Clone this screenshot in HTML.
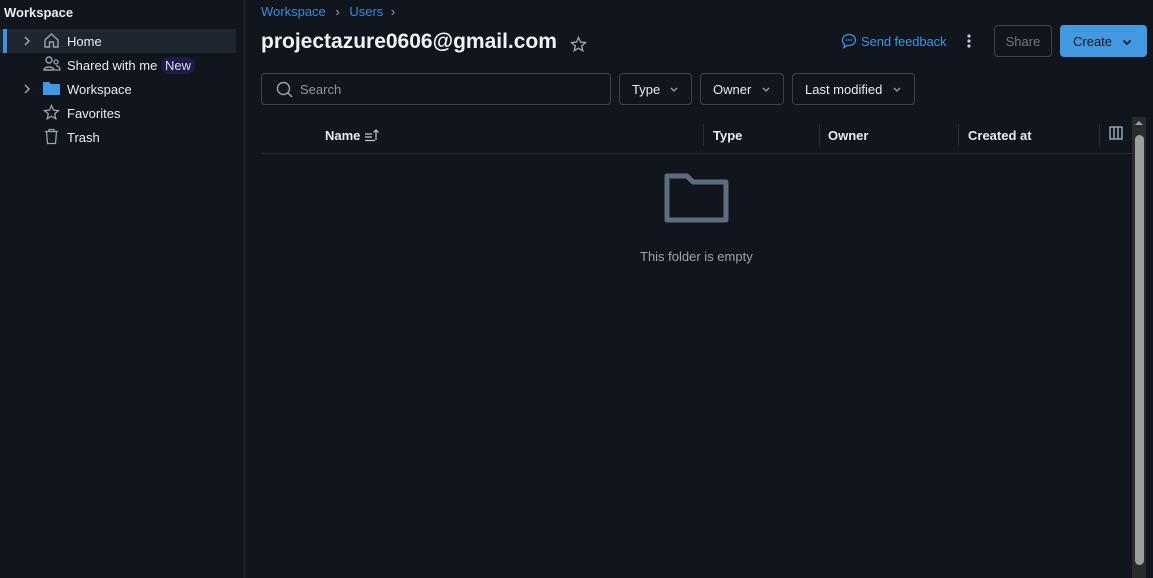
<!DOCTYPE html>
<html><head><style>
*{margin:0;padding:0;box-sizing:border-box}
body{width:1153px;height:578px;background:#11161e;font-family:"Liberation Sans",sans-serif;color:#e8ecf0;font-size:13px;position:relative;overflow:hidden}
.a{position:absolute}
.side{left:0;top:0;width:245px;height:578px;border-right:1px solid #252b33}
.item{left:0;height:24px;width:236px;display:flex;align-items:center}
.item span.t{position:absolute;left:67px;top:5px;color:#e8ecf0}
.chev{position:absolute;left:22px;top:6px;color:#9aa4ae;font-size:12px}
.btn{border:1px solid #3a424c;border-radius:4px;height:32px;top:73px;display:flex;align-items:center;padding-left:12px;color:#e8ecf0}
.dd{position:absolute;right:12px;top:12px}
.th{top:128px;font-weight:bold;color:#e8ecf0}
.sep{top:124px;width:1px;height:22px;background:#2a3039}
</style></head><body>
<div class="a side">
 <div class="a" style="left:4px;top:5px;font-weight:bold;font-size:13px">Workspace</div>
 <div class="a item" style="top:29px;background:#1e2630"><div class="a" style="left:3px;top:0;width:4px;height:24px;background:#3f94e0"></div>
  <svg class="a chev" width="10" height="12" viewBox="0 0 10 12"><path d="M3 2l4 4-4 4" fill="none" stroke="#9aa4ae" stroke-width="1.5"/></svg>
  <svg class="a" style="left:43px;top:3px" width="17" height="17" viewBox="0 0 17 17"><path d="M2 8L8.5 2 15 8v7h-4.5v-5h-4v5H2z" fill="none" stroke="#9aa4ae" stroke-width="1.4"/></svg>
  <span class="t">Home</span></div>
 <div class="a item" style="top:53px">
  <svg class="a" style="left:43px;top:3px" width="18" height="16" viewBox="0 0 18 16"><circle cx="6" cy="4" r="3" fill="none" stroke="#9aa4ae" stroke-width="1.4"/><path d="M1 14c0-4 10-4 10 0z" fill="none" stroke="#9aa4ae" stroke-width="1.4"/><circle cx="13" cy="6" r="2" fill="none" stroke="#9aa4ae" stroke-width="1.3"/><path d="M12 14h5c0-3-2-4-4-4" fill="none" stroke="#9aa4ae" stroke-width="1.3"/></svg>
  <span class="t">Shared with me</span><span class="a" style="left:161px;top:4px;background:#1e1b44;color:#d8dcff;border-radius:8px;padding:1px 4px">New</span></div>
 <div class="a item" style="top:77px">
  <svg class="a chev" width="10" height="12" viewBox="0 0 10 12"><path d="M3 2l4 4-4 4" fill="none" stroke="#9aa4ae" stroke-width="1.5"/></svg>
  <svg class="a" style="left:43px;top:4px" width="17" height="14" viewBox="0 0 17 14"><path d="M0 1h6l2 2h9v11H0z" fill="#4297e4"/></svg>
  <span class="t">Workspace</span></div>
 <div class="a item" style="top:101px">
  <svg class="a" style="left:43px;top:3px" width="17" height="17" viewBox="0 0 17 17"><path d="M8.5 1.5l2 4.6 5 .5-3.8 3.3 1.1 4.9-4.3-2.6-4.3 2.6 1.1-4.9L1.5 6.6l5-.5z" fill="none" stroke="#9aa4ae" stroke-width="1.3"/></svg>
  <span class="t">Favorites</span></div>
 <div class="a item" style="top:125px">
  <svg class="a" style="left:43px;top:3px" width="17" height="17" viewBox="0 0 17 17"><path d="M2 3.5h13M6 3.5V1.5h5v2M3.5 3.5l1 12h8l1-12" fill="none" stroke="#9aa4ae" stroke-width="1.3"/></svg>
  <span class="t">Trash</span></div>
</div>

<div class="a" style="left:261px;top:4px;color:#3c8ad6">Workspace <span style="color:#9aa4ae;margin:0 6px">›</span> Users <span style="color:#9aa4ae;margin-left:4px">›</span></div>
<div class="a" style="left:261px;top:30px;font-size:21px;font-weight:bold;color:#f0f3f6">projectazure0606@gmail.com</div>
<svg class="a" style="left:570px;top:36px" width="17" height="17" viewBox="0 0 17 17"><path d="M8.5 1.5l2 4.6 5 .5-3.8 3.3 1.1 4.9-4.3-2.6-4.3 2.6 1.1-4.9L1.5 6.6l5-.5z" fill="none" stroke="#9aa4ae" stroke-width="1.4"/></svg>

<svg class="a" style="left:841px;top:33px" width="16" height="16" viewBox="0 0 16 16"><path d="M8 1.5c3.6 0 6.5 2.4 6.5 5.5S11.6 12.5 8 12.5c-.6 0-1.2 0-1.7-.2L3 14.5l.6-3C2.3 10.5 1.5 9 1.5 7 1.5 3.9 4.4 1.5 8 1.5z" fill="none" stroke="#3f94e0" stroke-width="1.3"/><circle cx="5.5" cy="7" r=".9" fill="#3f94e0"/><circle cx="8" cy="7" r=".9" fill="#3f94e0"/><circle cx="10.5" cy="7" r=".9" fill="#3f94e0"/></svg>
<div class="a" style="left:861px;top:34px;color:#3f94e0;letter-spacing:-0.1px">Send feedback</div>
<svg class="a" style="left:966px;top:33px" width="6" height="16"><circle cx="3" cy="3" r="1.6" fill="#c0c8d0"/><circle cx="3" cy="8" r="1.6" fill="#c0c8d0"/><circle cx="3" cy="13" r="1.6" fill="#c0c8d0"/></svg>
<div class="a" style="left:994px;top:25px;width:58px;height:32px;border:1px solid #3a424c;border-radius:4px;color:#6e7780;text-align:center;line-height:32px">Share</div>
<div class="a" style="left:1060px;top:25px;width:87px;height:32px;background:#4299e1;border-radius:4px;color:#10161e;line-height:33px;padding-left:13px">Create<svg class="a" style="left:62px;top:14px" width="10" height="7"><path d="M1.5 1.5l3.5 3.5 3.5-3.5" fill="none" stroke="#10161e" stroke-width="1.6"/></svg></div>

<div class="a btn" style="left:261px;width:350px;color:#8d96a0"><svg style="margin:0 7px 0 2px" width="17" height="17" viewBox="0 0 17 17"><circle cx="7.5" cy="7.5" r="6" fill="none" stroke="#9aa4ae" stroke-width="1.4"/><path d="M12 12l4 4" stroke="#9aa4ae" stroke-width="1.4"/></svg>Search</div>
<div class="a btn" style="left:619px;width:73px">Type<svg class="dd" width="10" height="7"><path d="M2 2l3 3 3-3" fill="none" stroke="#9aa4ae" stroke-width="1.3"/></svg></div>
<div class="a btn" style="left:700px;width:84px">Owner<svg class="dd" width="10" height="7"><path d="M2 2l3 3 3-3" fill="none" stroke="#9aa4ae" stroke-width="1.3"/></svg></div>
<div class="a btn" style="left:792px;width:123px">Last modified<svg class="dd" width="10" height="7"><path d="M2 2l3 3 3-3" fill="none" stroke="#9aa4ae" stroke-width="1.3"/></svg></div>

<div class="a th" style="left:325px">Name</div>
<svg class="a" style="left:364px;top:128px" width="16" height="14" viewBox="0 0 16 14"><path d="M1 6h7M1 9h7M1 12.5h10M12 12V2M9.5 4.5L12 2l2.5 2.5" fill="none" stroke="#c0c8d0" stroke-width="1.2"/></svg>
<div class="a sep" style="left:703px"></div><div class="a th" style="left:713px">Type</div>
<div class="a sep" style="left:819px"></div><div class="a th" style="left:828px">Owner</div>
<div class="a sep" style="left:958px"></div><div class="a th" style="left:968px">Created at</div>
<div class="a sep" style="left:1099px"></div>
<svg class="a" style="left:1109px;top:126px" width="14" height="14" viewBox="0 0 14 14"><path d="M1 1h12v12H1zM5 1v12M9 1v12" fill="none" stroke="#a8b8c8" stroke-width="1.3"/></svg>
<div class="a" style="left:261px;top:153px;width:871px;height:1px;background:#252b33"></div>

<svg class="a" style="left:664px;top:173px" width="65" height="50" viewBox="0 0 65 50"><path d="M3 3h20l6 6h33v38H3z" fill="none" stroke="#5c6e7e" stroke-width="5" stroke-linejoin="round"/></svg>
<div class="a" style="left:640px;top:249px;color:#9aa4ae">This folder is empty</div>

<div class="a" style="left:1132px;top:117px;width:14px;height:461px;background:#2b2b2b"></div>
<svg class="a" style="left:1134px;top:120px" width="10" height="6"><path d="M1 5l4-4 4 4z" fill="#a0a0a0"/></svg>
<div class="a" style="left:1135px;top:135px;width:9px;height:430px;background:#9e9e9e;border-radius:5px"></div>
</body></html>
